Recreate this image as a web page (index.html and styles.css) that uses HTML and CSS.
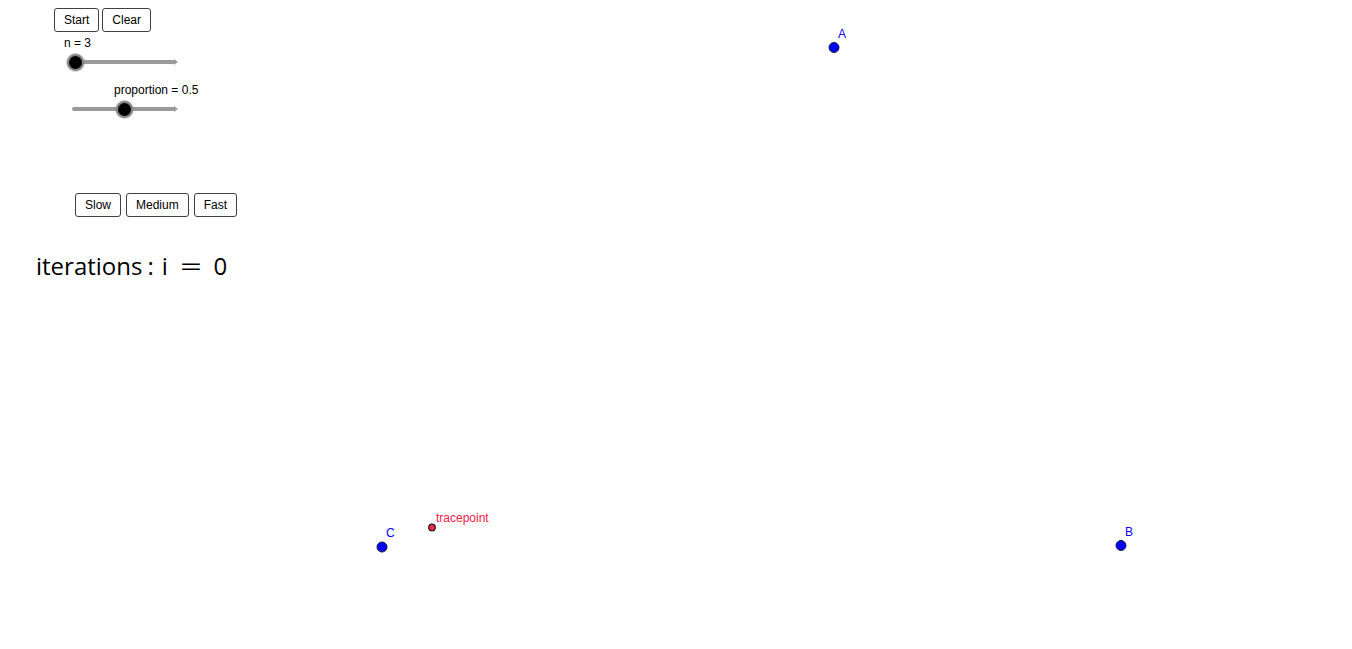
FILE: index.html
```html
<!DOCTYPE html>
<html lang="en">
<head>
  <meta charset="UTF-8" />
  <title>Chaos Game</title>
  <link rel="stylesheet" href="styles.css">
</head>
<body>

<div class="applet">
  <div class="controls">
    <div class="btn-row top-row">
      <button class="ggb-btn">Start</button>
      <button class="ggb-btn">Clear</button>
    </div>

    <div class="slider-label label-n">n = 3</div>
    <div class="slider slider-n">
      <div class="track"></div>
      <div class="knob" style="left: 0%"></div>
    </div>

    <div class="slider-label label-p">proportion = 0.5</div>
    <div class="slider slider-p">
      <div class="track"></div>
      <div class="knob" style="left: 50%"></div>
    </div>

    <div class="btn-row speed-row">
      <button class="ggb-btn">Slow</button>
      <button class="ggb-btn">Medium</button>
      <button class="ggb-btn">Fast</button>
    </div>

    <div class="iterations">
      iterations<span class="op">:</span>i<span class="eq">=</span>0
    </div>
  </div>

  <!-- drawing pad: free points -->
  <svg class="canvas" width="1352" height="649" viewBox="0 0 1352 649">
    <circle class="pt" cx="834" cy="47.5" r="5" />
    <text class="pt-label" x="838" y="38">A</text>

    <circle class="pt" cx="1121" cy="545.5" r="5" />
    <text class="pt-label" x="1125" y="536">B</text>

    <circle class="pt" cx="382" cy="547" r="5" />
    <text class="pt-label" x="386" y="537">C</text>

    <circle class="trace" cx="432" cy="527.5" r="3.3" />
    <text class="trace-label" x="436" y="522">tracepoint</text>
  </svg>
</div>

</body>
</html>
```

FILE: styles.css
```css
* {
  box-sizing: border-box;
}
body {
  margin: 0;
  background: #ffffff;
  font-family: "Liberation Sans", Arial, sans-serif;
}
.applet {
  position: relative;
  width: 1352px;
  height: 649px;
  overflow: hidden;
  background: #ffffff;
}
.controls {
  display: flex;
  flex-direction: column;
  align-items: flex-start;
}
.btn-row {
  display: flex;
  height: 24px;
}
.top-row {
  margin: 8px 0 0 54px;
  gap: 3px;
}
.speed-row {
  margin: 76px 0 0 75px;
  gap: 5px;
}
.ggb-btn {
  height: 24px;
  padding: 0 9px;
  font-family: "Liberation Sans", Arial, sans-serif;
  font-size: 12px;
  color: #000000;
  background: #ffffff;
  border: 1px solid #404040;
  border-radius: 3px;
  cursor: pointer;
}
.slider-label {
  height: 12px;
  line-height: 12px;
  font-size: 12px;
  color: #000000;
}
.label-n {
  margin: 5px 0 0 64px;
}
.label-p {
  margin: 14px 0 0 114px;
}
.slider {
  position: relative;
  height: 16px;
}
.slider-n {
  margin: 5px 0 0 75px;
  width: 100px;
}
.slider-p {
  margin: 5px 0 0 72px;
  width: 103px;
}
.track {
  position: absolute;
  left: 0;
  right: 0;
  top: 6px;
  height: 4px;
  background: #9a9a9a;
  border-radius: 2px;
}
.track::after {
  content: "";
  position: absolute;
  right: -3px;
  top: -1px;
  border-left: 4px solid #9a9a9a;
  border-top: 3px solid transparent;
  border-bottom: 3px solid transparent;
}
.knob {
  position: absolute;
  top: -0.5px;
  width: 17px;
  height: 17px;
  margin-left: -8.5px;
  border-radius: 50%;
  background: #000000;
  border: 2px solid #858585;
  box-shadow: 0 0 0 1px rgba(120, 120, 120, 0.35);
}
.slider-p .knob {
  margin-left: -7.5px;
}
.iterations {
  margin: 33px 0 0 36px;
  font-family: "Open Sans", sans-serif;
  font-size: 24px;
  line-height: 32px;
  color: #000000;
  white-space: nowrap;
}
.op {
  margin: 0 8px 0 5px;
}
.eq {
  display: inline-block;
  margin: 0 16px 0 16px;
  transform: scaleX(1.6);
}
.canvas {
  position: absolute;
  left: 0;
  top: 0;
}
.pt {
  fill: #0000ff;
  stroke: #1a1a40;
  stroke-width: 1;
}
.pt-label {
  fill: #0000ff;
  font-family: "Liberation Sans", Arial, sans-serif;
  font-size: 12px;
}
.trace {
  fill: #f0284a;
  stroke: #202020;
  stroke-width: 1.2;
}
.trace-label {
  fill: #f0204a;
  font-family: "Liberation Sans", Arial, sans-serif;
  font-size: 12px;
}
```
